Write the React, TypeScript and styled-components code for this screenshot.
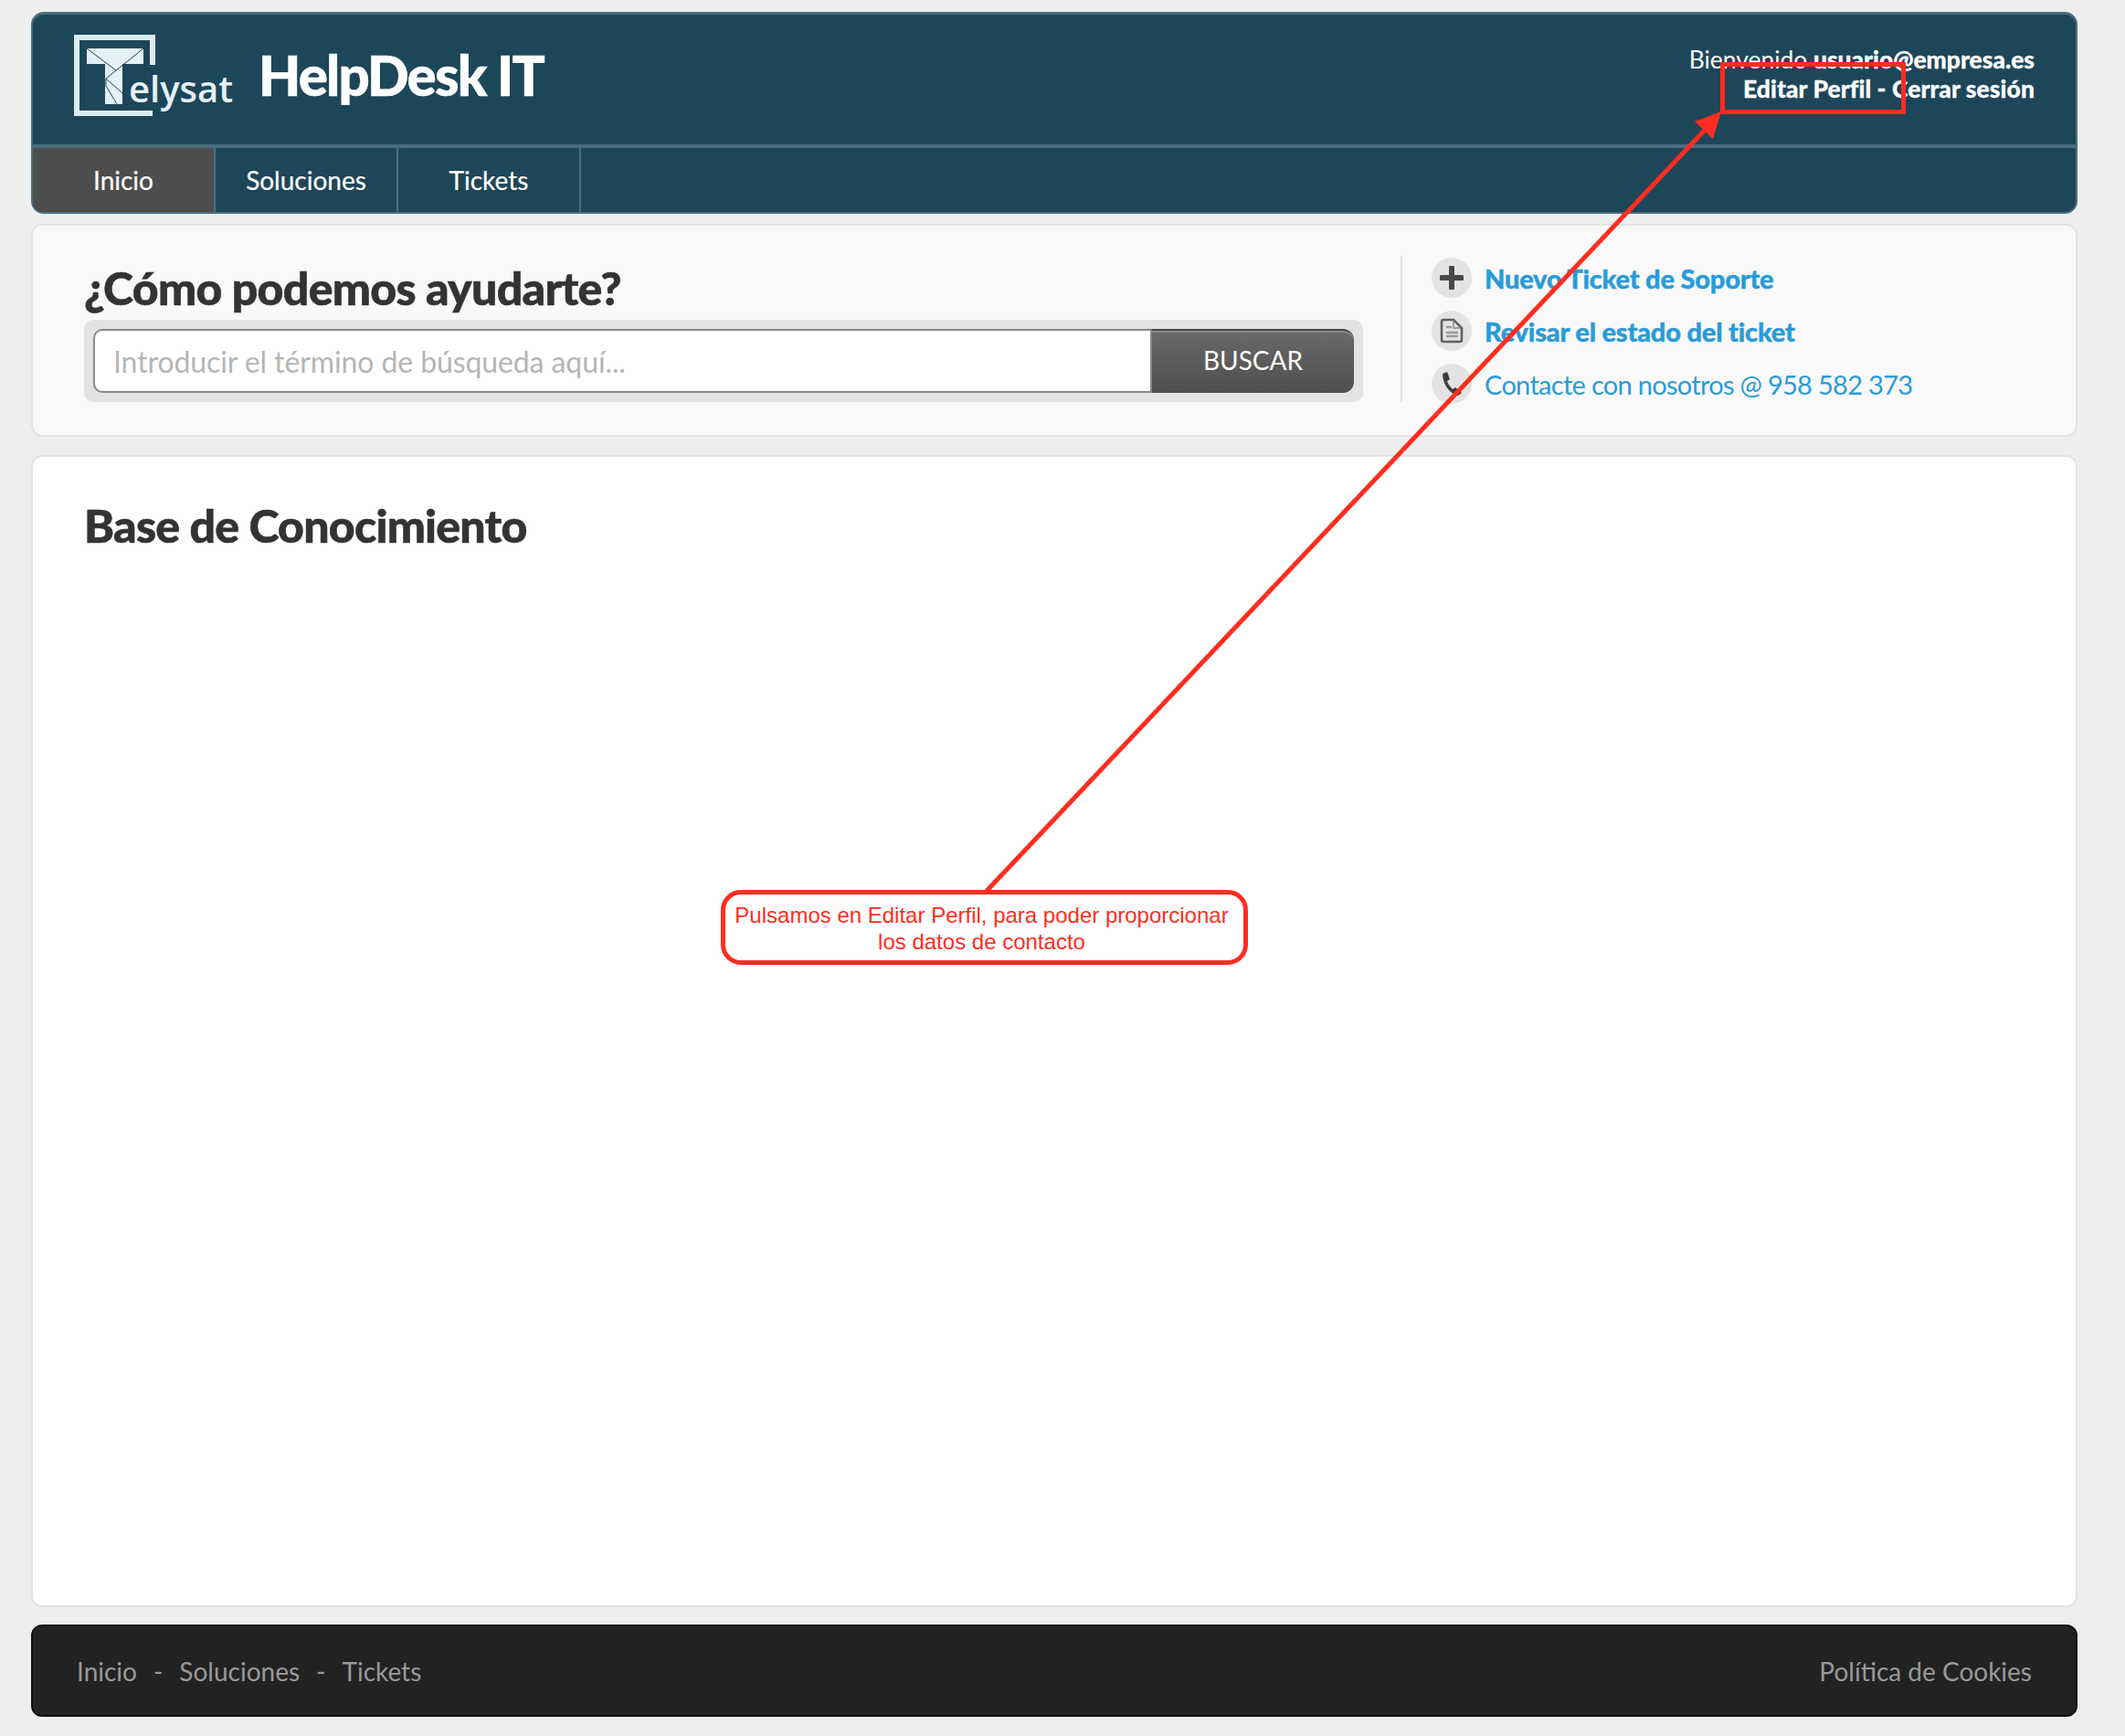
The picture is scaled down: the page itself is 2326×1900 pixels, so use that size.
import { FC } from "react";
import styled, { createGlobalStyle } from "styled-components";

const GlobalStyle = createGlobalStyle`
  html, body {
    margin: 0;
    padding: 0;
    background: #eeeeee;
    font-family: "Lato", "Open Sans", sans-serif;
  }
`;

const navItems = ["Inicio", "Soluciones", "Tickets"];

const App: FC = () => {
  return (
    <Page>
      <GlobalStyle />
      <Header>
        <Brand>
          <BrandLeft>
            <Logo />
            <SiteName>HelpDesk IT</SiteName>
          </BrandLeft>
          <UserBox>
            <Welcome>
              Bienvenido <strong>usuario@empresa.es</strong>
            </Welcome>
            <UserLinks>Editar Perfil - Cerrar sesión</UserLinks>
          </UserBox>
        </Brand>
        <Nav>
          {navItems.map((item, i) => (
            <NavItem key={item} $active={i === 0}>
              {item}
            </NavItem>
          ))}
        </Nav>
      </Header>

      <SearchPanel>
        <SearchColumn>
          <SearchTitle>¿Cómo podemos ayudarte?</SearchTitle>
          <SearchWell>
            <SearchInput placeholder="Introducir el término de búsqueda aquí..." />
            <SearchButton>BUSCAR</SearchButton>
          </SearchWell>
        </SearchColumn>
        <LinksColumn>
          <LinkRow>
            <IconCircle>
              <PlusIcon />
            </IconCircle>
            <ActionLink $bold>Nuevo Ticket de Soporte</ActionLink>
          </LinkRow>
          <LinkRow>
            <IconCircle>
              <DocIcon />
            </IconCircle>
            <ActionLink $bold>Revisar el estado del ticket</ActionLink>
          </LinkRow>
          <LinkRow>
            <IconCircle>
              <PhoneIcon />
            </IconCircle>
            <ActionLink>Contacte con nosotros @ 958 582 373</ActionLink>
          </LinkRow>
        </LinksColumn>
      </SearchPanel>

      <MainPanel>
        <MainTitle>Base de Conocimiento</MainTitle>
      </MainPanel>

      <Footer>
        <FooterLinks>
          <span>Inicio</span>
          <span>-</span>
          <span>Soluciones</span>
          <span>-</span>
          <span>Tickets</span>
        </FooterLinks>
        <span>Política de Cookies</span>
      </Footer>

      <ArrowLayer width="2326" height="1900" viewBox="0 0 2326 1900">
        <line x1="1080" y1="975" x2="1872" y2="136" stroke="#ff2d20" strokeWidth="5" />
        <polygon points="1884,122 1875,152 1855,133" fill="#ff2d20" />
      </ArrowLayer>
      <Highlight />
      <Callout>
        Pulsamos en Editar Perfil, para poder proporcionar
        <br />
        los datos de contacto
      </Callout>
    </Page>
  );
};

export default App;

const Logo: FC = () => (
  <LogoSvg width="180" height="92" viewBox="0 0 180 92">
    <path d="M86 33V3H3V86H86" fill="none" stroke="#dcebf2" strokeWidth="6" />
    <path d="M14 15H76V32H53V76H34V32H14Z" fill="#e3f0f6" />
    <path
      d="M14 15L46 39M76 15L35 48L53 64M35 48V56L47 76"
      fill="none"
      stroke="#1e4659"
      strokeWidth="1"
    />
    <LogoText x="60" y="74">
      elysat
    </LogoText>
  </LogoSvg>
);

const PlusIcon: FC = () => (
  <svg width="26" height="26" viewBox="0 0 26 26">
    <path d="M13 2V24M2 13H24" stroke="#484848" strokeWidth="6" strokeLinecap="round" />
  </svg>
);

const DocIcon: FC = () => (
  <svg width="26" height="28" viewBox="0 0 26 28">
    <path
      d="M4 2H15L24 11V24Q24 26 22 26H4Q2 26 2 24V4Q2 2 4 2Z"
      fill="none"
      stroke="#606060"
      strokeWidth="2.6"
    />
    <path d="M15 3V11H23" fill="none" stroke="#8a8a8a" strokeWidth="1.5" />
    <path d="M7 10H13M7 16H20M7 20H20" stroke="#9a9a9a" strokeWidth="2.4" />
  </svg>
);

const PhoneIcon: FC = () => (
  <svg width="28" height="28" viewBox="0 0 28 28">
    <path
      d="M4 3L9 1L12 9L9 11Q10 15 15 20L18 18L25 24L21 27Q13 25 8 17Q4 10 4 3Z"
      fill="#3c3c3c"
    />
  </svg>
);

const Page = styled.div`
  position: relative;
  box-sizing: border-box;
  width: 2326px;
  height: 1900px;
  padding: 13px 52px 0 34px;
  overflow: hidden;
`;

const Header = styled.header`
  height: 221px;
  box-sizing: border-box;
  background: #1e4659;
  border: 2px solid #4a6d7d;
  border-top-width: 3px;
  border-radius: 14px;
  overflow: hidden;
  display: flex;
  flex-direction: column;
`;

const Brand = styled.div`
  height: 146px;
  flex: none;
  box-sizing: border-box;
  border-bottom: 4px solid #4a6d7d;
  padding: 0 45px;
  display: flex;
  justify-content: space-between;
  align-items: flex-start;
`;

const BrandLeft = styled.div`
  display: flex;
  align-items: flex-start;
  padding-top: 22px;
`;

const LogoSvg = styled.svg`
  display: block;
  margin-right: 22px;
`;

const LogoText = styled.text`
  font-family: "Open Sans", sans-serif;
  font-size: 40px;
  font-weight: 600;
  fill: #e3f0f6;
`;

const SiteName = styled.h1`
  margin: 0;
  padding-top: 9px;
  font-size: 60px;
  line-height: 70px;
  font-weight: 900;
  color: #ffffff;
  letter-spacing: -1.8px;
  -webkit-text-stroke: 0.6px #ffffff;
`;

const UserBox = styled.div`
  padding-top: 33px;
  text-align: right;
  color: #ffffff;
  font-size: 26.4px;
  line-height: 32px;
`;

const Welcome = styled.div`
  strong {
    font-weight: 900;
    -webkit-text-stroke: 0.3px #ffffff;
  }
`;

const UserLinks = styled.div`
  font-weight: 900;
  letter-spacing: 0.1px;
  -webkit-text-stroke: 0.3px #ffffff;
`;

const Nav = styled.nav`
  flex: 1;
  display: flex;
`;

const NavItem = styled.div<{ $active?: boolean }>`
  width: 200px;
  box-sizing: border-box;
  border-right: 2px solid #4a6d7d;
  background: ${(props) => (props.$active ? "#4d4d4d" : "transparent")};
  color: #ffffff;
  font-size: 28px;
  -webkit-text-stroke: 0.2px #ffffff;
  display: flex;
  align-items: center;
  justify-content: center;
`;

const SearchPanel = styled.section`
  margin-top: 11px;
  height: 233px;
  box-sizing: border-box;
  background: #f9f9f9;
  border: 2px solid #e3e3e3;
  border-radius: 12px;
  padding: 33px 0 0 56px;
  display: flex;
`;

const SearchColumn = styled.div`
  width: 1400px;
`;

const SearchTitle = styled.h2`
  margin: 3px 0 3px;
  font-size: 50px;
  line-height: 64px;
  font-weight: 900;
  color: #333333;
  letter-spacing: -0.7px;
  -webkit-text-stroke: 0.6px #333333;
`;

const SearchWell = styled.div`
  height: 90px;
  box-sizing: border-box;
  padding: 10px;
  background: #e3e3e3;
  border-radius: 10px;
  display: flex;
`;

const SearchInput = styled.input`
  flex: 1;
  min-width: 0;
  box-sizing: border-box;
  border: 2px solid #888888;
  border-right: none;
  border-radius: 10px 0 0 10px;
  background: #ffffff;
  padding: 0 20px;
  font-family: "Lato", sans-serif;
  font-size: 32px;
  letter-spacing: -0.1px;
  outline: none;
  &::placeholder {
    color: #b5b5b5;
    opacity: 1;
  }
`;

const SearchButton = styled.button`
  width: 223px;
  flex: none;
  border: none;
  border-left: 2px solid #888888;
  border-top: 2px solid #4b4b4b;
  border-radius: 0 12px 12px 0;
  background: linear-gradient(#6a6868, #4f4f4f);
  box-shadow: inset 0 2px 0 #8a8888;
  color: #ffffff;
  font-family: "Lato", sans-serif;
  font-size: 28px;
  padding: 0 0 4px;
`;

const LinksColumn = styled.div`
  margin-left: 41px;
  height: 160px;
  box-sizing: border-box;
  border-left: 2px solid #e3e3e3;
  padding: 2px 0 0 32px;
  display: flex;
  flex-direction: column;
  gap: 14px;
`;

const LinkRow = styled.div`
  display: flex;
  align-items: center;
  gap: 14px;
`;

const IconCircle = styled.span`
  width: 44px;
  height: 44px;
  border-radius: 50%;
  background: #e3e3e3;
  display: flex;
  align-items: center;
  justify-content: center;
`;

const ActionLink = styled.a<{ $bold?: boolean }>`
  color: #2a9bd8;
  font-size: 29px;
  font-weight: ${(props) => (props.$bold ? 900 : 400)};
  letter-spacing: ${(props) => (props.$bold ? "-0.2px" : "-0.7px")};
  -webkit-text-stroke: ${(props) => (props.$bold ? "0.4px #2a9bd8" : "0")};
`;

const MainPanel = styled.main`
  margin-top: 20px;
  height: 1261px;
  box-sizing: border-box;
  background: #ffffff;
  border: 2px solid #e3e3e3;
  border-radius: 12px;
  padding: 45px 56px 0;
`;

const MainTitle = styled.h2`
  margin: 0;
  font-size: 50px;
  line-height: 60px;
  font-weight: 900;
  color: #333333;
  letter-spacing: -0.75px;
  -webkit-text-stroke: 0.6px #333333;
`;

const Footer = styled.footer`
  margin-top: 19px;
  height: 101px;
  box-sizing: border-box;
  background: #222222;
  border: 2px solid #0f0f0f;
  border-radius: 12px;
  padding: 0 48px;
  display: flex;
  align-items: center;
  justify-content: space-between;
  color: #999999;
  font-size: 28px;
`;

const FooterLinks = styled.div`
  display: flex;
  gap: 18px;
`;

const ArrowLayer = styled.svg`
  position: absolute;
  top: 0;
  left: 0;
  pointer-events: none;
`;

const Highlight = styled.div`
  position: absolute;
  left: 1883px;
  top: 68px;
  width: 203px;
  height: 57px;
  box-sizing: border-box;
  border: 5px solid #ff2d20;
`;

const Callout = styled.div`
  position: absolute;
  left: 789px;
  top: 974px;
  width: 577px;
  height: 82px;
  box-sizing: border-box;
  border: 5px solid #ff2d20;
  border-radius: 22px;
  background: #ffffff;
  color: #ff2d20;
  font-family: "Liberation Sans", Arial, sans-serif;
  font-size: 24px;
  line-height: 29px;
  text-align: center;
  padding: 8px 6px 0 0;
`;
